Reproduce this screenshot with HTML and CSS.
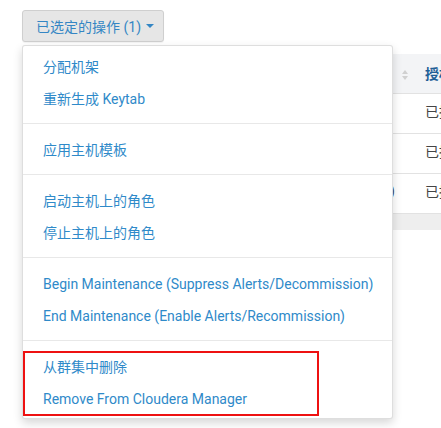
FILE: index.html
```html
<!DOCTYPE html>
<html lang="zh-CN">
<head>
<meta charset="utf-8">
<title>已选定的操作</title>
<link rel="stylesheet" href="styles.css">
</head>
<body>
<div class="page">
  <div class="toolbar">
    <button class="btn">已选定的操作 (1) <span class="caret"></span></button>
  </div>
  <div class="table-wrap">
    <table class="hosts">
      <thead>
        <tr>
          <th class="col-a"><span class="sort"><span class="up"></span><span class="down"></span></span></th>
          <th class="col-b">授权</th>
        </tr>
      </thead>
      <tbody>
        <tr><td class="col-a"></td><td class="col-b">已授</td></tr>
        <tr><td class="col-a"></td><td class="col-b">已授</td></tr>
        <tr><td class="col-a">(1)</td><td class="col-b">已授</td></tr>
      </tbody>
    </table>
    <div class="table-foot"></div>
  </div>

  <ul class="menu">
    <li class="item">分配机架</li>
    <li class="item">重新生成 Keytab</li>
    <li class="divider"></li>
    <li class="item">应用主机模板</li>
    <li class="divider"></li>
    <li class="item">启动主机上的角色</li>
    <li class="item">停止主机上的角色</li>
    <li class="divider"></li>
    <li class="item">Begin Maintenance (Suppress Alerts/Decommission)</li>
    <li class="item">End Maintenance (Enable Alerts/Recommission)</li>
    <li class="divider"></li>
    <li class="highlight">
      <ul class="sub">
        <li class="item">从群集中删除</li>
        <li class="item">Remove From Cloudera Manager</li>
      </ul>
    </li>
  </ul>
</div>
</body>
</html>
```

FILE: styles.css
```css
* { box-sizing: border-box; }
html, body { margin: 0; padding: 0; background: #fff; }
body {
  font-family: Roboto, "Noto Sans CJK SC", sans-serif;
  font-size: 14px;
  color: #333;
  overflow: hidden;
  width: 441px;
  height: 428px;
}
.page {
  position: relative;
  padding: 10px 0 0 22px;
}
.toolbar { display: flex; }
.btn {
  font: inherit;
  font-size: 14px;
  color: #3486c4;
  background: #e6e6e6;
  border: 1px solid #cfcfcf;
  border-radius: 3px;
  height: 32px;
  padding: 0 9px 0 13px;
  display: flex;
  align-items: center;
  gap: 4px;
  box-shadow: 0 1px 1px rgba(0,0,0,0.05);
}
.caret {
  display: inline-block;
  width: 0; height: 0;
  border-left: 4px solid transparent;
  border-right: 4px solid transparent;
  border-top: 4px solid #3486c4;
  margin-left: 1px;
}
.table-wrap {
  margin-top: 12px;
  width: 419px;
  overflow: hidden;
}
.hosts {
  border-collapse: collapse;
  table-layout: fixed;
  width: 460px;
}
.hosts th, .hosts td {
  border-bottom: 1px solid #e2e2e2;
  white-space: nowrap;
  overflow: hidden;
  text-align: left;
}
.hosts th {
  background: #f3f4f6;
  height: 39px;
  color: #1f5f96;
  font-weight: bold;
  padding: 0 0 0 10px;
}
.hosts td {
  height: 40px;
  padding: 0 0 5px 10px;
  color: #444;
}
.hosts .col-a { width: 393px; text-align: right; padding-right: 21px; }
.hosts td.col-a { padding-right: 20px; }
.sort {
  display: inline-flex;
  flex-direction: column;
  gap: 2px;
  vertical-align: middle;
  margin-right: -14px;
}
.sort .up, .sort .down {
  width: 0; height: 0;
  border-left: 3px solid transparent;
  border-right: 3px solid transparent;
}
.sort .up { border-bottom: 4px solid #d0d0d0; }
.sort .down { border-top: 4px solid #d0d0d0; }
.table-foot {
  height: 16px;
  background: #eeeeee;
}
.menu {
  position: absolute;
  top: 45px;
  left: 22px;
  width: 371px;
  margin: 0;
  padding: 5px 0 3px;
  list-style: none;
  background: #fff;
  border: 1px solid rgba(0,0,0,0.13);
  border-radius: 3px;
  box-shadow: 0 4px 10px rgba(0,0,0,0.16);
}
.item {
  height: 32px;
  line-height: 32px;
  padding-left: 20px;
  color: #2f8ac9;
  white-space: nowrap;
}
.divider {
  height: 1px;
  background: #e8e8e8;
  margin: 8px 0 10px;
}
.highlight {
  position: relative;
}
.highlight::after {
  content: "";
  position: absolute;
  top: 0;
  left: 0;
  width: 292px;
  height: 61px;
  border: 2px solid #ee1111;
  pointer-events: none;
}
.sub {
  list-style: none;
  margin: 0;
  padding: 0;
}
```
